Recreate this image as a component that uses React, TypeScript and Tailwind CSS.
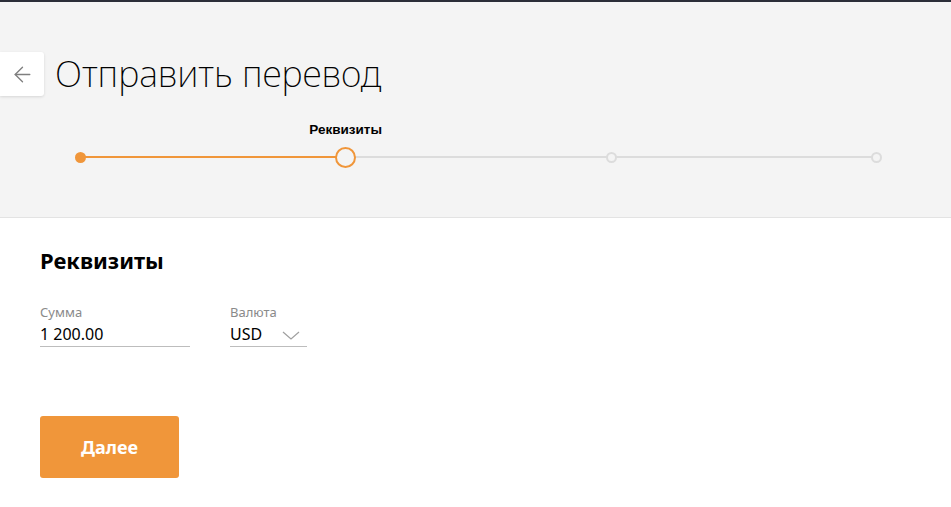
import { ArrowLeft } from 'lucide-react';

const steps = [
    { label: '', state: 'done' },
    { label: 'Реквизиты', state: 'active' },
    { label: '', state: 'todo' },
    { label: '', state: 'todo' },
];

function Stepper() {
    return (
        <div className="relative ml-[80px] mr-[74px] h-[60px]">
            {/* track */}
            <div className="absolute left-0 right-0 top-[45px] flex">
                <div className="h-[2px] w-[266px] bg-[#f0963a]" />
                <div className="h-[2px] flex-1 bg-[#dcdcdc]" />
            </div>
            <div className="absolute left-0 right-0 top-0 flex justify-between">
                {steps.map((step, i) => (
                    <div key={i} className="flex w-0 flex-col items-center">
                        <div className="h-[36px] whitespace-nowrap pt-[12px] text-[13.5px] font-bold leading-none text-black [font-family:'Liberation_Sans',Arial,sans-serif]">
                            {step.label}
                        </div>
                        {step.state === 'done' && (
                            <div className="mt-[5px] h-[11px] w-[11px] shrink-0 rounded-full bg-[#f0963a]" />
                        )}
                        {step.state === 'active' && (
                            <div className="h-[21px] w-[21px] shrink-0 rounded-full border-2 border-[#f0963a] bg-[#f4f4f4]" />
                        )}
                        {step.state === 'todo' && (
                            <div className="mt-[5px] h-[11px] w-[11px] shrink-0 rounded-full border-2 border-[#dcdcdc] bg-[#f4f4f4]" />
                        )}
                    </div>
                ))}
            </div>
        </div>
    );
}

export default function App() {
    return (
        <div className="min-h-[507px] w-full bg-white [font-family:'Noto_Sans',sans-serif]">
            <div className="h-[2px] bg-[#2b2e38]" />
            <div className="border-b border-[#e3e3e3] bg-[#f4f4f4] pb-[46px] pt-[50px]">
                <div className="flex items-center">
                    <button className="flex h-[44px] w-[44px] items-center justify-center rounded-r-[3px] bg-white shadow-[0_1px_3px_rgba(0,0,0,0.12)]">
                        <ArrowLeft size={25} strokeWidth={1.3} className="text-[#7f7f7f]" />
                    </button>
                    <h1 className="ml-[11px] text-[36px] font-extralight leading-none text-black">
                        Отправить перевод
                    </h1>
                </div>
                <div className="mt-[15px]">
                    <Stepper />
                </div>
            </div>

            <div className="px-[40px] pt-[27px]">
                <h2 className="text-[22px] font-bold leading-[30px] text-black">Реквизиты</h2>
                <div className="mt-[29px] flex gap-[40px]">
                    <div className="w-[150px]">
                        <div className="text-[13px] leading-[16px] text-[#8a8a8a]">Сумма</div>
                        <div className="mt-[4px] border-b border-[#bdbdbd] pb-[2px] text-[16px] leading-[20px] text-black">
                            1 200.00
                        </div>
                    </div>
                    <div className="w-[77px]">
                        <div className="text-[13px] leading-[16px] text-[#8a8a8a]">Валюта</div>
                        <div className="mt-[4px] flex items-center justify-between border-b border-[#bdbdbd] pb-[2px] text-[16px] leading-[20px] text-black">
                            <span>USD</span>
                            <svg width="18" height="9" viewBox="0 0 18 9" className="mr-[7px] mt-[2px]">
                                <polyline points="1,1 9,8 17,1" fill="none" stroke="#a0a0a0" strokeWidth="1.2" />
                            </svg>
                        </div>
                    </div>
                </div>
                <button className="mt-[69px] h-[62px] w-[139px] rounded-[3px] bg-[#f0963a] text-[18px] font-bold text-white">
                    Далее
                </button>
            </div>
        </div>
    );
}
